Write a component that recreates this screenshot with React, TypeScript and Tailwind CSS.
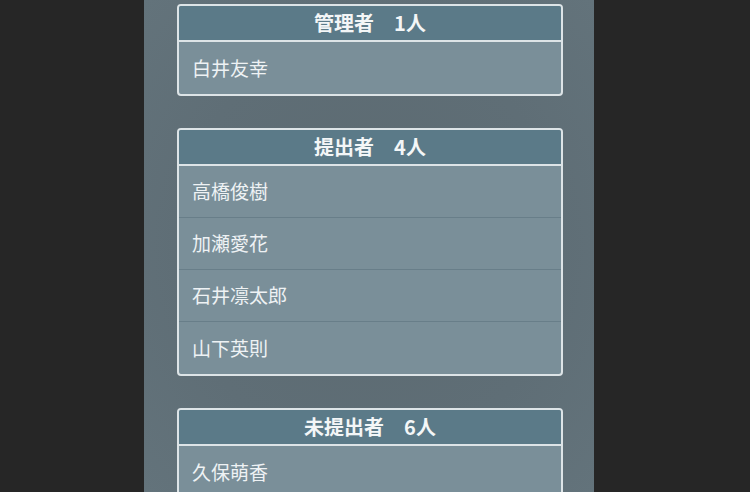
import React from 'react';

const groups = [
  { title: '管理者', count: 1, members: ['白井友幸'] },
  { title: '提出者', count: 4, members: ['高橋俊樹', '加瀬愛花', '石井凛太郎', '山下英則'] },
  { title: '未提出者', count: 6, members: ['久保萌香'] },
];

function MemberCard({ title, count, members }: { title: string; count: number; members: string[] }) {
  return (
    <div className="shrink-0 border-2 border-[#dde4e7] rounded-[4px] overflow-hidden bg-[#7a8f99]">
      <div className="h-[36px] flex items-center justify-center bg-[#5b7a88] border-b-2 border-[#dde4e7] text-[20px] font-bold text-[#f3f6f7]">
        {title}　{count}人
      </div>
      {members.map((name, i) => (
        <div
          key={name}
          className={`h-[52px] flex items-center pl-[13px] text-[19px] text-[#eef2f4] ${i < members.length - 1 ? 'border-b border-[#687e89]' : ''}`}
        >
          {name}
        </div>
      ))}
    </div>
  );
}

export default function App() {
  return (
    <div
      className="w-full h-[492px] bg-[#262626] flex pl-[144px] overflow-hidden"
      style={{ fontFamily: '"Noto Sans CJK JP", "Noto Sans", sans-serif' }}
    >
      <div className="w-[450px] h-full bg-[radial-gradient(ellipse_at_center,#5c6a71_0%,#5f6e76_60%,#63737b_100%)] pt-[4px] pl-[33px] pr-[31px] flex flex-col gap-[32px]">
        {groups.map((g) => (
          <MemberCard key={g.title} {...g} />
        ))}
      </div>
    </div>
  );
}
